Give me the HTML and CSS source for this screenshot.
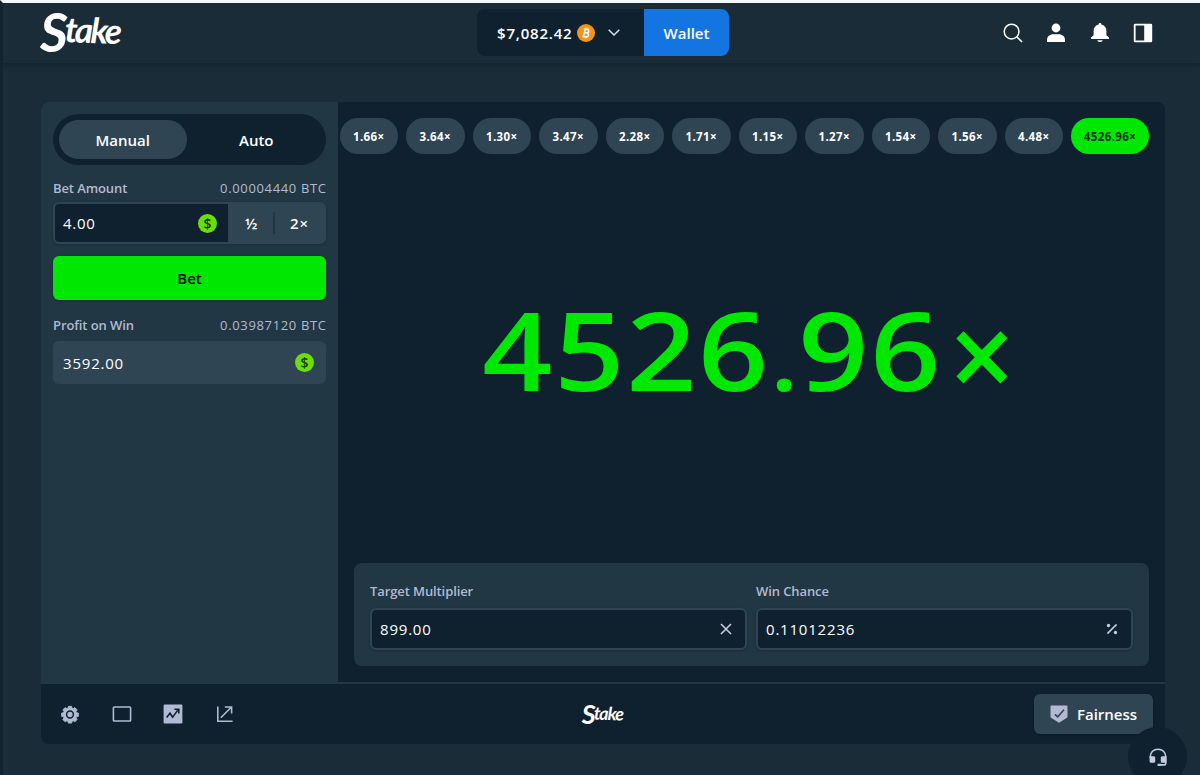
FILE: index.html
```html
<!DOCTYPE html>
<html lang="en">
<head>
    <meta charset="UTF-8">
    <meta name="viewport" content="width=device-width, initial-scale=1.0">
    <title>Stake</title>
    <link rel="stylesheet" href="styles.css">
</head>
<body>
    <div class="page">
        <header class="header">
            <div class="logo"><span class="logo-s">S</span><span class="logo-rest">take</span></div>
            <div class="wallet">
                <div class="balance">
                    <span class="amount">$7,082.42</span>
                    <svg class="coin" viewBox="0 0 18 18">
                        <circle cx="9" cy="9" r="9" fill="#f7931a"/>
                        <g transform="rotate(12 9 9)" fill="none" stroke="#fff" stroke-width="1.5">
                            <path d="M6 5.4h3.6a1.7 1.7 0 0 1 0 3.5H7.2M6 12.6h4a1.8 1.8 0 0 0 0-3.7H7.2M7.4 5.4v7.2"/>
                            <path d="M7.9 3.8v1.6M10 3.8v1.6M7.9 12.6v1.6M10 12.6v1.6" stroke-width="1.1"/>
                        </g>
                    </svg>
                    <svg class="chevron" viewBox="0 0 12 7"><path d="M.7.7 6 6 11.3.7" fill="none" stroke="#d5dceb" stroke-width="1.5"/></svg>
                </div>
                <button class="wallet-btn">Wallet</button>
            </div>
            <nav class="nav">
                <svg viewBox="0 0 20 20"><circle cx="8.6" cy="8.6" r="7.4" fill="none" stroke="#fff" stroke-width="1.5"/><path d="m14 14 5 5" stroke="#fff" stroke-width="1.7"/></svg>
                <svg viewBox="0 0 20 20"><circle cx="10" cy="5" r="4.4" fill="#fff"/><path d="M1 19v-2.2C1 13.4 4 11.2 7.2 11.2h5.6c3.2 0 6.2 2.200 6.200 5.600V19z" fill="#fff"/></svg>
                <svg viewBox="0 0 20 20"><path d="M8.600 1.400a1.400 1.400 0 0 1 2.800 0c3 .7 5 3 5 6.200v4.600l2.600 2.200v1.700H1v-1.700l2.600-2.200V7.600c0-3.200 2-5.500 5-6.200zM7.300 17.200h5.400c-.2 1-1.300 1.900-2.700 1.900s-2.500-.9-2.700-1.900z" fill="#fff"/></svg>
                <svg viewBox="0 0 20 20"><path fill-rule="evenodd" d="M2 .8h16a1.200 1.200 0 0 1 1.200 1.200v16a1.200 1.200 0 0 1-1.200 1.200H2A1.200 1.200 0 0 1 .8 18V2A1.200 1.200 0 0 1 2 .8zm.6 1.800v14.800h8.600V2.600z" fill="#fff"/></svg>
            </nav>
        </header>

        <main class="card">
            <div class="game">
                <aside class="sidebar">
                    <div class="tabs">
                        <button class="tab active">Manual</button>
                        <button class="tab">Auto</button>
                    </div>
                    <div class="label-row"><span>Bet Amount</span><span class="crypto">0.00004440 BTC</span></div>
                    <div class="bet-input">
                        <div class="field">
                            <span>4.00</span>
                            <span class="dollar">$</span>
                        </div>
                        <button class="mini half">½</button>
                        <button class="mini double">2×</button>
                    </div>
                    <button class="bet-btn">Bet</button>
                    <div class="label-row profit-label"><span>Profit on Win</span><span class="crypto">0.03987120 BTC</span></div>
                    <div class="profit">
                        <span>3592.00</span>
                        <span class="dollar">$</span>
                    </div>
                </aside>

                <section class="stage">
                    <div class="history">
                        <span class="pill">1.66×</span>
                        <span class="pill">3.64×</span>
                        <span class="pill">1.30×</span>
                        <span class="pill">3.47×</span>
                        <span class="pill">2.28×</span>
                        <span class="pill">1.71×</span>
                        <span class="pill">1.15×</span>
                        <span class="pill">1.27×</span>
                        <span class="pill">1.54×</span>
                        <span class="pill">1.56×</span>
                        <span class="pill">4.48×</span>
                        <span class="pill win">4526.96×</span>
                    </div>
                    <div class="result">
                        <div class="multiplier">4526<span class="dot">.</span>96<span class="times">×</span></div>
                    </div>
                    <div class="controls">
                        <div class="control">
                            <label>Target Multiplier</label>
                            <div class="box">
                                <span>899.00</span>
                                <svg class="box-icon" viewBox="0 0 12 12"><path d="m1 1 10 10M11 1 1 11" stroke="#c3cce0" stroke-width="1.6"/></svg>
                            </div>
                        </div>
                        <div class="control">
                            <label>Win Chance</label>
                            <div class="box">
                                <span>0.11012236</span>
                                <svg class="box-icon" viewBox="0 0 12 12"><path d="M10.6 1.4 1.4 10.6" stroke="#c3cce0" stroke-width="1.6"/><circle cx="2.5" cy="2.5" r="1.7" fill="#c3cce0"/><circle cx="9.5" cy="9.5" r="1.7" fill="#c3cce0"/></svg>
                            </div>
                        </div>
                    </div>
                </section>
            </div>

            <footer class="footer">
                <div class="tools">
                    <!-- settings -->
                    <svg viewBox="0 0 20 20"><path d="M8.200 1.500h3.600l.5 2.100 1.200.5 1.900-1.200 2.500 2.500-1.200 1.900.5 1.200 2.100.5v3.600l-2.100.5-.5 1.200 1.200 1.900-2.500 2.500-1.900-1.200-1.200.5-.5 2.100H8.200l-.5-2.100-1.200-.5-1.900 1.200-2.500-2.500 1.200-1.900-.5-1.200-2.100-.5V9l2.100-.5.5-1.200-1.200-1.900 2.500-2.500 1.900 1.200 1.200-.5z" transform="translate(1 1) scale(.9)" fill="#b1bad3" stroke="#b1bad3" stroke-width="1" stroke-linejoin="round"/><circle cx="10" cy="10.500" r="3.400" fill="none" stroke="#0f212e" stroke-width="1.500"/></svg>
                    <!-- theatre mode -->
                    <svg viewBox="0 0 20 20"><rect x="1.4" y="3" width="17.2" height="14" rx=".8" fill="none" stroke="#b1bad3" stroke-width="1.6"/></svg>
                    <!-- live stats -->
                    <svg viewBox="0 0 20 20"><rect x=".6" y=".6" width="18.8" height="18.8" rx="1.2" fill="#b1bad3"/><path d="m3.600 13.400 3.400-4.200 2.600 4 5.600-7.600M11.400 5.200h4.400v4.200" fill="none" stroke="#0f212e" stroke-width="1.6"/></svg>
                    <!-- detach -->
                    <svg viewBox="0 0 20 20"><path d="M2.800 2.400v14.800h14.800M5.800 13.800 16.200 3.200M9.800 3h6.800v6.600" fill="none" stroke="#b1bad3" stroke-width="1.6"/></svg>
                </div>
                <div class="logo small"><span class="logo-s">S</span><span class="logo-rest">take</span></div>
                <button class="fairness">
                    <svg viewBox="0 0 18 18"><path d="M1.300.5h15.400a.8.8 0 0 1 .8.8v10.200c0 .7-.3 1.200-.9 1.600L9 17.800l-7.600-4.700c-.6-.4-.9-.9-.9-1.600V1.300a.8.8 0 0 1 .8-.8z" fill="#b1bad3"/><path d="m4.900 9.300 2.800 2.600L14 4.800" fill="none" stroke="#2f4553" stroke-width="1.6"/></svg>
                    <span>Fairness</span>
                </button>
            </footer>
        </main>

        <button class="support">
            <svg viewBox="0 0 18 18"><path d="M1.300 10V8.600C1.300 4.300 4.600 1.200 9 1.200s7.700 3.100 7.700 7.400v6.800c0 1-.6 1.500-1.500 1.500H10" fill="none" stroke="#c3cce0" stroke-width="1.6"/><path d="M.6 8.200h4c1 0 1.600.6 1.600 1.600v3.400c0 1-.6 1.600-1.600 1.600H2.300c-1 0-1.700-.6-1.700-1.600zM17.400 8.200h-4c-1 0-1.600.6-1.600 1.600v3.400c0 1 .6 1.600 1.600 1.600h4zM8.600 15.700h3.200v2.300H8.600z" fill="#c3cce0"/></svg>
        </button>
    </div>
</body>
</html>
```
FILE: styles.css
```css
*{
    padding: 0;
    margin: 0;
    box-sizing: border-box;
}
body{
    background-color: #1a2c38;
    font-family: 'Open Sans','Noto Sans',sans-serif;
    color: #fff;
    font-size: 15px;
    overflow: hidden;
}
button{
    font-family: inherit;
    color: inherit;
    border: none;
    background: none;
}
svg{
    display: block;
    flex-shrink: 0;
}
.page{
    position: relative;
    height: 775px;
    border-top: 3px solid #f3f8fb;
    border-left: 3px solid #13242f;
    overflow: hidden;
}

/* header */
.header{
    height: 60px;
    padding: 0 47px 0 37px;
    display: grid;
    grid-template-columns: 437px 252px 1fr;
    grid-template-rows: 60px;
    align-items: center;
    background-color: #1a2c38;
    box-shadow: 0 2px 5px rgba(0,0,0,.25);
}
.logo{
    display: flex;
    align-items: flex-start;
    padding-bottom: 2px;
    font-family: 'Lato',sans-serif;
    font-style: italic;
    font-weight: 700;
    line-height: 1;
}
.logo-s{
    font-size: 54px;
    letter-spacing: -3px;
}
.logo-rest{
    padding-top: 7px;
    font-size: 35px;
    letter-spacing: -2.4px;
    transform: rotate(2deg);
}
.wallet{
    display: flex;
    height: 47px;
    width: 252px;
    margin-bottom: 1px;
    border-radius: 8px;
    overflow: hidden;
}
.balance{
    width: 167px;
    padding-left: 20px;
    display: flex;
    align-items: center;
    background-color: #0f212e;
}
.amount{
    width: 76px;
    font-weight: 600;
    letter-spacing: .8px;
    white-space: nowrap;
}
.coin{
    width: 18px;
    height: 18px;
    margin-left: 4px;
}
.chevron{
    width: 12px;
    height: 7px;
    margin-left: 13px;
}
.wallet-btn{
    flex: 1;
    background-color: #1475e1;
    font-size: 15px;
    font-weight: 600;
}
.nav{
    display: flex;
    justify-content: flex-end;
    gap: 23.5px;
}
.nav svg{
    width: 20px;
    height: 20px;
}

/* game card */
.card{
    width: 1124px;
    height: 642px;
    margin: 39px 0 0 38px;
    border-radius: 8px;
    overflow: hidden;
    background-color: #0f212e;
}
.game{
    display: flex;
    height: 580px;
}
.sidebar{
    flex: none;
    width: 297px;
    padding: 12px;
    background-color: #213743;
}
.tabs{
    display: flex;
    height: 51px;
    padding: 6px;
    gap: 6px;
    border-radius: 26px;
    background-color: #0f212e;
}
.tab{
    flex: 1;
    border-radius: 20px;
    font-size: 15px;
    font-weight: 600;
}
.tab.active{
    background-color: #2f4553;
}
.label-row{
    display: flex;
    justify-content: space-between;
    align-items: center;
    height: 18px;
    margin: 14px 0 5px;
    color: #b1bad3;
    font-size: 13px;
    font-weight: 600;
    letter-spacing: -.1px;
}
.crypto{
    font-weight: 500;
    letter-spacing: .65px;
    margin-right: -.65px;
}
.bet-input{
    display: flex;
    height: 42px;
    border: 2px solid #2f4553;
    border-radius: 6px;
    background-color: #2f4553;
    box-shadow: 0 1px 3px rgba(0,0,0,.2);
}
.field{
    width: 173px;
    padding: 0 11px 0 8px;
    display: flex;
    justify-content: space-between;
    align-items: center;
    border-radius: 4px 0 0 4px;
    background-color: #0f212e;
    font-weight: 500;
    letter-spacing: .7px;
}
.dollar{
    width: 19px;
    height: 19px;
    border-radius: 50%;
    background-color: #6cde07;
    color: #1b3802;
    font-size: 14px;
    font-weight: 600;
    letter-spacing: 0;
    line-height: 19px;
    text-align: center;
}
.mini{
    flex: 1;
    font-size: 15px;
    font-weight: 600;
    letter-spacing: .8px;
}
.half{
    position: relative;
    flex: none;
    width: 47px;
}
.half::after{
    content: "";
    position: absolute;
    right: 0;
    top: 8px;
    width: 2px;
    height: 22px;
    background-color: #213743;
}
.bet-btn{
    display: block;
    width: 100%;
    height: 44px;
    margin-top: 12px;
    border-radius: 6px;
    background-color: #00e701;
    color: #05080a;
    font-size: 15px;
    font-weight: 600;
    box-shadow: 0 1px 3px rgba(0,0,0,.2);
}
.profit-label{
    margin: 16px 0 7px;
}
.profit{
    display: flex;
    justify-content: space-between;
    align-items: center;
    height: 43px;
    padding: 0 12px 0 10px;
    border-radius: 6px;
    background-color: #2f4553;
    font-weight: 500;
    letter-spacing: .8px;
}

/* result area */
.stage{
    flex: 1;
    min-width: 0;
    padding: 16px;
    display: flex;
    flex-direction: column;
}
.history{
    display: flex;
    justify-content: flex-end;
    gap: 8px;
    height: 36px;
}
.pill{
    flex: none;
    width: 58.5px;
    border-radius: 18px;
    background-color: #2f4553;
    font-size: 11.5px;
    font-weight: 700;
    letter-spacing: .4px;
    line-height: 37px;
    text-align: center;
}
.pill.win{
    width: 78px;
    background-color: #00e701;
    color: #05340b;
}
.result{
    flex: 1;
    display: flex;
    justify-content: center;
    align-items: center;
    padding: 0 4px 20px 0;
    color: #00e701;
}
.multiplier{
    font-size: 109px;
    font-weight: 600;
    letter-spacing: 1.6px;
    line-height: 1;
    white-space: nowrap;
    transform: scaleX(1.125);
}
.dot{
    font-size: 92px;
    letter-spacing: 0;
    line-height: 0;
}
.times{
    display: inline-block;
    margin-left: 4px;
    letter-spacing: 0;
    transform: translateY(5px) scale(.94,1.08);
}
.controls{
    display: flex;
    gap: 9px;
    height: 103px;
    padding: 16px;
    border-radius: 8px;
    background-color: #213743;
}
.control{
    flex: 1;
}
.control label{
    display: block;
    height: 29px;
    line-height: 24px;
    color: #b1bad3;
    font-size: 13px;
    font-weight: 600;
    letter-spacing: -.1px;
}
.box{
    display: flex;
    justify-content: space-between;
    align-items: center;
    height: 42px;
    padding: 0 13px 0 8px;
    border: 2px solid #2f4553;
    border-radius: 6px;
    background-color: #0f212e;
    font-weight: 500;
    letter-spacing: .8px;
    box-shadow: 0 1px 3px rgba(0,0,0,.2);
}
.box-icon{
    width: 12px;
    height: 12px;
}

/* footer */
.footer{
    display: grid;
    grid-template-columns: 1fr auto 1fr;
    align-items: center;
    height: 61px;
    padding: 0 12px 0 19px;
    border-top: 2px solid #213743;
}
.tools{
    display: flex;
    gap: 31.5px;
}
.tools svg{
    width: 20px;
    height: 20px;
}
.small{
    padding-bottom: 0;
    margin-right: 8px;
}
.small .logo-s{
    font-size: 27px;
    letter-spacing: -1.5px;
}
.small .logo-rest{
    padding-top: 4px;
    font-size: 18px;
    letter-spacing: -1px;
}
.fairness{
    justify-self: end;
    display: flex;
    align-items: center;
    justify-content: center;
    gap: 9px;
    width: 119px;
    height: 40px;
    border-radius: 6px;
    background-color: #2f4553;
    font-size: 15px;
    font-weight: 600;
    box-shadow: 0 1px 3px rgba(0,0,0,.2);
}
.fairness svg{
    width: 18px;
    height: 18px;
}

/* floating chat button over the page corner */
.support{
    position: absolute;
    right: 13px;
    bottom: -11px;
    width: 59px;
    height: 59px;
    display: flex;
    justify-content: center;
    align-items: center;
    border-radius: 50%;
    background-color: #0f212e;
}
.support svg{
    width: 18px;
    height: 18px;
}
```
